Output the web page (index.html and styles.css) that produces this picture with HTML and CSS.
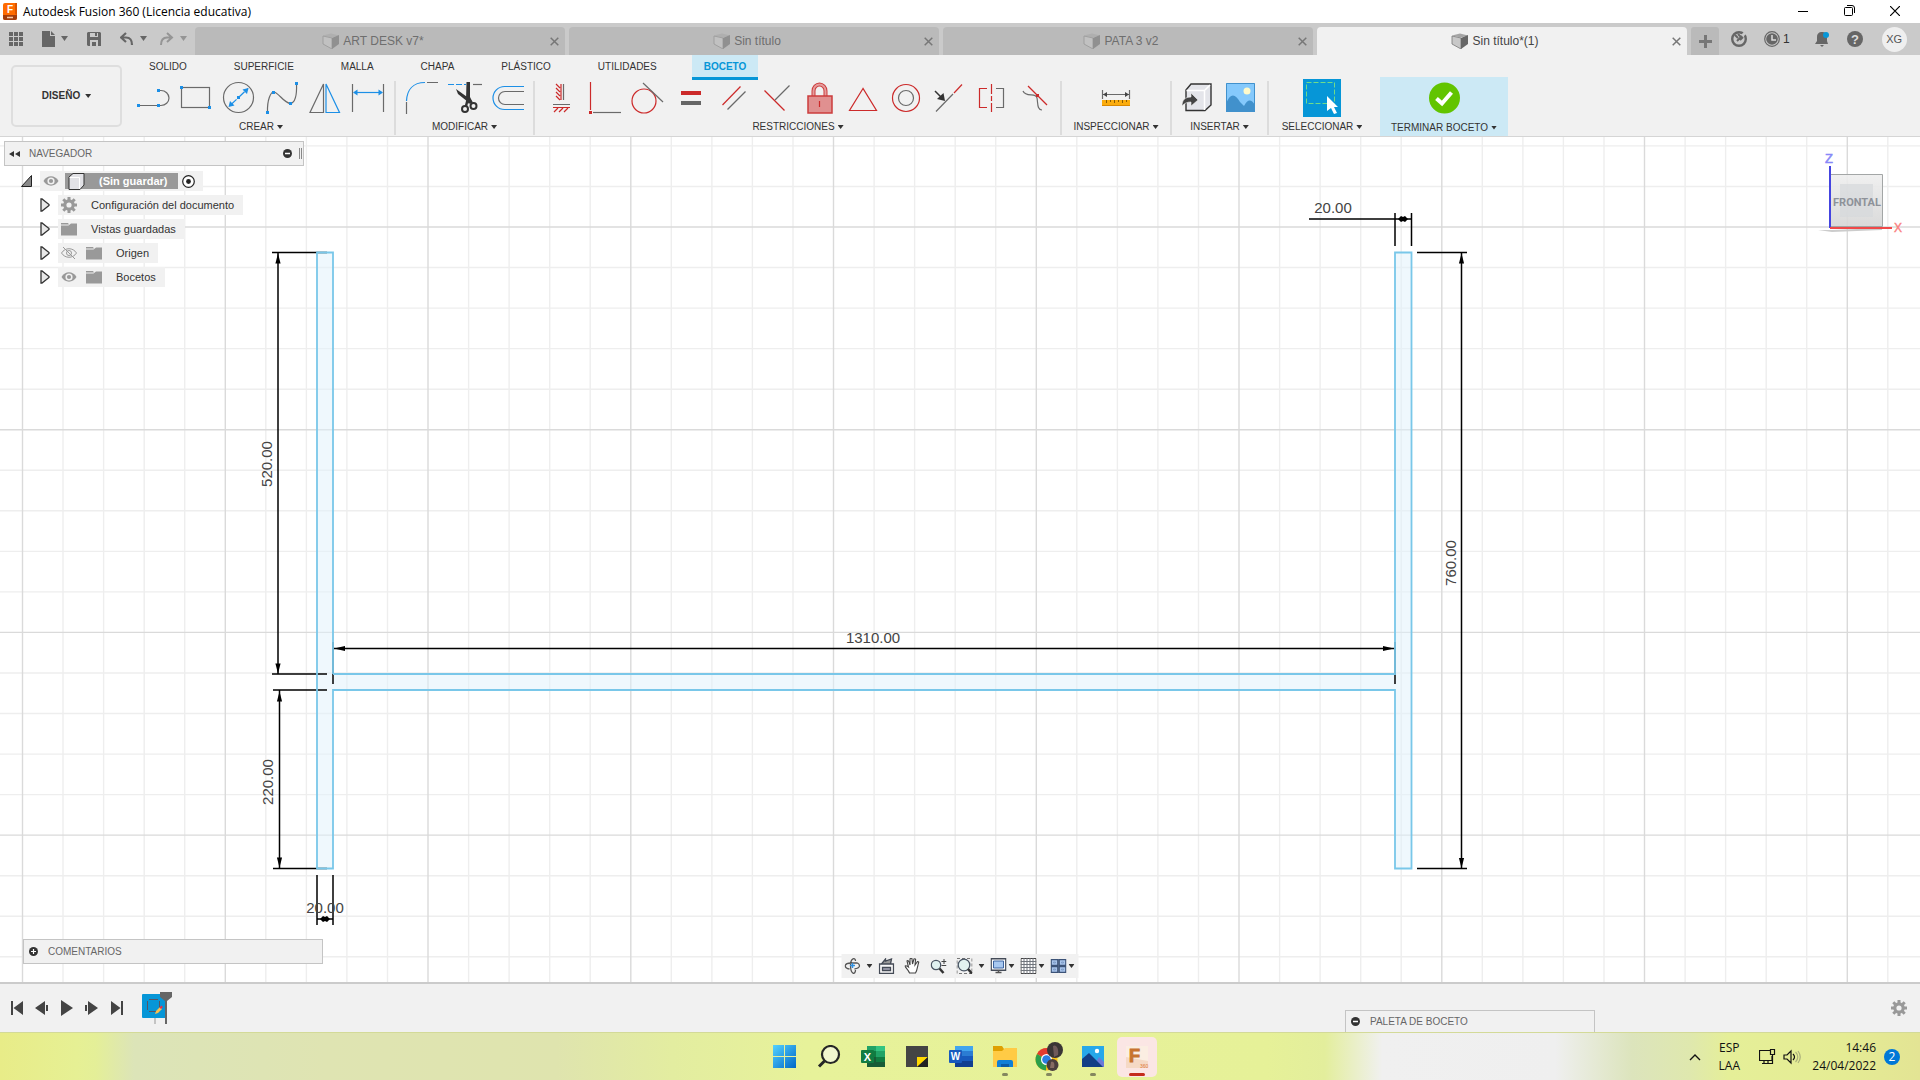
FILE: index.html
```html
<!DOCTYPE html>
<html lang="es">
<head>
<meta charset="utf-8">
<title>Autodesk Fusion 360 (Licencia educativa)</title>
<link rel="stylesheet" href="styles.css">
</head>
<body>
<svg class="defs" aria-hidden="true">
  <defs>
    <symbol id="cube" viewBox="0 0 17 16"><path d="M1 2.500 9 .5l8 2-7 2z" fill="#a5a5a5"/><path d="M1 3l9 2v11l-9-5z" fill="#c8c8c8" stroke="#777" stroke-width=".8"/><path d="M10 5l7-3v9l-7 5z" fill="#676767"/></symbol>
    <symbol id="folder" viewBox="0 0 16 14"><path d="M0 1h7l1 1.500H0z M0 3.500h7.500L10 1.500h6V13.500H0z" fill="#999"/></symbol>
    <symbol id="eye" viewBox="0 0 16 12"><path d="M.5 6C4-.2 12-.2 15.500 6 12 12.200 4 12.200.5 6z" fill="#999"/><circle cx="8" cy="6" r="3.600" fill="#f1f1f1"/><circle cx="8" cy="6" r="2.100" fill="#999"/></symbol>
    <symbol id="gear" viewBox="0 0 16 16"><circle cx="8" cy="8" r="4.200" fill="none" stroke="#999" stroke-width="3.200"/><path d="M8 0v3M8 13v3M0 8h3M13 8h3M2.300 2.300l2.200 2.200M11.500 11.500l2.200 2.200M2.300 13.700l2.200-2.200M11.500 4.500l2.200-2.200" stroke="#999" stroke-width="3"/></symbol>
    <symbol id="x" viewBox="0 0 9 9"><path d="M.7.7l7.600 7.600M8.300.7L.7 8.300" stroke="currentColor" stroke-width="1.500"/></symbol>
    <symbol id="tri" viewBox="0 0 10 14"><path d="M1 1v12l1 0 7-5.500v-1L2 1z" fill="#e8e8e8" stroke="#333" stroke-width="1.300"/></symbol>
    <symbol id="up" viewBox="0 0 6 10"><path d="M3 0l2.600 10H.4z"/></symbol>
  </defs>
</svg>

<header class="titlebar">
  <svg class="app-logo" width="14" height="17" viewBox="0 0 14 17"><rect width="14" height="17" rx="2" fill="#ff6b00"/><path d="M0 12h14v3a2 2 0 0 1-2 2H2a2 2 0 0 1-2-2z" fill="#a23c0c"/><path d="M12 0h2v12l-2-1z" fill="#d95400"/><text x="4" y="10" font-size="10" font-weight="bold" fill="#fff" font-family="Liberation Sans, sans-serif">F</text><path d="M4 14.500h6" stroke="#f7c9a9" stroke-width="1.500"/></svg>
  <h1>Autodesk Fusion 360 (Licencia educativa)</h1>
  <div class="window-buttons">
    <button aria-label="Minimizar"><svg width="10" height="10"><path d="M0 5.500h10" stroke="#000"/></svg></button>
    <button aria-label="Restaurar"><svg width="11" height="11" fill="none" stroke="#000"><rect x=".5" y="2.500" width="8" height="8" rx="1"/><path d="M3 .5h5a2.500 2.500 0 0 1 2.500 2.500v5"/></svg></button>
    <button aria-label="Cerrar"><svg width="10" height="10"><path d="M0 0l10 10M10 0L0 10" stroke="#000" stroke-width="1.200"/></svg></button>
  </div>
</header>

<nav class="tabbar">
  <div class="quick">
    <button aria-label="Panel de datos"><svg width="14" height="14" fill="#666"><path d="M0 0h4v4H0zM5 0h4v4H5zM10 0h4v4h-4zM0 5h4v4H0zM5 5h4v4H5zM10 5h4v4h-4zM0 10h4v4H0zM5 10h4v4H5zM10 10h4v4h-4z"/></svg></button>
    <button class="q-file" aria-label="Archivo"><svg width="26" height="16" fill="#666"><path d="M0 0h8v5h5v11H0zM9 0l4 4H9zM19 5h7l-3.500 5z"/></svg></button>
    <button class="q-save" aria-label="Guardar"><svg width="14" height="14"><path d="M1 0h12l1 1v13H1l-1-1V1z" fill="#666"/><path d="M3 1h8v4H3zM3 8h8v6H3z" fill="#cacaca"/><path d="M8 1h2v3H8zM5 10h4v4H5z" fill="#666"/></svg></button>
    <button class="q-undo" aria-label="Deshacer"><svg width="27" height="14"><path d="M6 1L1 5.500 6 10M1.500 5.500H6c5 0 6 3 6 7.500" fill="none" stroke="#666" stroke-width="2.200"/><path d="M20 4h7l-3.500 5z" fill="#666"/></svg></button>
    <button class="q-redo" aria-label="Rehacer"><svg width="27" height="14"><path d="M7 1l5 4.500L7 10M11.500 5.500H7C2 5.500 1 8.500 1 13" fill="none" stroke="#959595" stroke-width="2"/><path d="M20 4h7l-3.500 5z" fill="#959595"/></svg></button>
  </div>
  <div class="doc-tabs">
    <div class="doc"><a href="#"><svg width="17" height="16" opacity=".5"><use href="#cube"/></svg>ART DESK v7*</a><button aria-label="Cerrar pestaña"><svg width="9" height="9"><use href="#x"/></svg></button></div>
    <div class="doc"><a href="#"><svg width="17" height="16" opacity=".5"><use href="#cube"/></svg>Sin título</a><button aria-label="Cerrar pestaña"><svg width="9" height="9"><use href="#x"/></svg></button></div>
    <div class="doc"><a href="#"><svg width="17" height="16" opacity=".5"><use href="#cube"/></svg>PATA 3 v2</a><button aria-label="Cerrar pestaña"><svg width="9" height="9"><use href="#x"/></svg></button></div>
    <div class="doc active"><a href="#"><svg width="17" height="16"><use href="#cube"/></svg>Sin título*(1)</a><button aria-label="Cerrar pestaña"><svg width="9" height="9"><use href="#x"/></svg></button></div>
  </div>
  <button class="new-tab" aria-label="Nueva pestaña"><svg width="13" height="13"><path d="M6.500 0v13M0 6.500h13" stroke="#777" stroke-width="3"/></svg></button>
  <div class="account">
    <button aria-label="Extensiones"><svg width="16" height="16"><circle cx="8" cy="8" r="6.800" fill="none" stroke="#666" stroke-width="2.400"/><path d="M11 5l5-5" stroke="#cacaca" stroke-width="3"/><path d="M4 4l3 3M7 3l3 3M6 10l5-5M9 9l3-3" stroke="#666" stroke-width="2"/></svg></button>
    <button class="jobs" aria-label="Estado de trabajos"><svg width="16" height="16"><circle cx="8" cy="8" r="7.300" fill="none" stroke="#666" stroke-width="1.200"/><circle cx="8" cy="8" r="5.800" fill="#666"/><path d="M8 4v5h4" fill="none" stroke="#ddd" stroke-width="1.500"/></svg>1</button>
    <button class="bell" aria-label="Notificaciones"><svg width="15" height="16"><path d="M6 1a5 5 0 0 0-4 5v4l-2 3h13l-1-3V6A5 5 0 0 0 8 1zM5 14h4l-2 2z" fill="#666"/><circle cx="11" cy="4" r="3" fill="#0696d7"/></svg></button>
    <button class="help" aria-label="Ayuda"><svg width="16" height="16"><circle cx="8" cy="8" r="8" fill="#666"/><text x="8" y="13" font-size="13" font-weight="bold" text-anchor="middle" fill="#ddd" font-family="Liberation Sans, sans-serif">?</text></svg></button>
    <button class="avatar">XG</button>
  </div>
</nav>

<section class="ribbon">
  <button class="workspace">DISEÑO<i class="caret"></i></button>
  <div class="ribbon-main">
    <nav class="ribbon-tabs">
      <a href="#">SOLIDO</a><a href="#">SUPERFICIE</a><a href="#">MALLA</a><a href="#">CHAPA</a><a href="#">PLÁSTICO</a><a href="#">UTILIDADES</a><a href="#" class="current">BOCETO</a>
    </nav>
    <div class="groups">
      <div class="group">
        <div class="tools">
          <button aria-label="Línea"><svg class="tool" viewBox="0 2 43 38"><path d="M6 26.500H29a8 7.500 0 0 0 0-15H27" class="g"/><path d="M5 25h3v3H5zM25 25h3v3h-3zM25 10h3v3h-3z" class="bf"/></svg></button>
          <button aria-label="Rectángulo"><svg class="tool" viewBox="0 2 43 38"><rect x="6.500" y="8.500" width="28" height="20" class="g"/><path d="M5 7h3v3H5zM33 27h3v3h-3z" class="bf"/></svg></button>
          <button aria-label="Círculo"><svg class="tool" viewBox="0 2 43 38"><circle cx="20.500" cy="18.500" r="15" class="g"/><path d="M12 26.500L30 9.500" class="b" stroke-dasharray="9 2"/><path d="M10.500 28l1.500-6 4.500 4.500zM30.500 9L29 15l-4.500-4.500zM19 17h3v3h-3z" class="bf"/></svg></button>
          <button aria-label="Spline"><svg class="tool" viewBox="0 2 43 38"><path d="M6.500 33.500C6 20 10 13 12.500 13c5 0 10 11 17 11.500 5-1 6.500-8 6-20" class="g"/><path d="M5 32h3v3H5zM11 12h3v3h-3zM28 23h3v3h-3zM34 3h3v3h-3z" class="bf"/></svg></button>
          <button aria-label="Simetría"><svg class="tool" viewBox="0 2 43 38"><path d="M19.500 5v28.500H6z" class="g"/><path d="M22 5v28.500h13.500z" class="b"/></svg></button>
          <button aria-label="Cota"><svg class="tool" viewBox="0 2 43 38"><path d="M5.500 5v28M36.500 5v28" class="g"/><path d="M8 13.500h27" class="b"/><path d="M6 13.500l4.500-3v6zM36 13.500l-4.500-3v6z" class="bf"/></svg></button>
        </div>
        <button class="menu">CREAR<i class="caret"></i></button>
      </div>
      <div class="group tight">
        <div class="tools">
          <button aria-label="Empalme"><svg class="tool" viewBox="0 2 43 38"><path d="M6.500 22C7 11 13 3.500 25 3.500" class="b"/><path d="M27 3.500h11M6.500 23v12" class="g"/></svg></button>
          <button aria-label="Recortar"><svg class="tool" viewBox="0 2 43 38"><path d="M5 5.500h18" class="b" stroke-dasharray="6 2"/><path d="M30 5.500h9" class="g"/><path d="M23.500 3h3.500v15l2 4-3 3-3-4zM13 10l14 10-2 3-10-8z" fill="#333"/><circle cx="22" cy="30" r="3" fill="none" stroke="#333" stroke-width="2"/><circle cx="30.500" cy="27" r="3" fill="none" stroke="#333" stroke-width="2"/><path d="M24.500 21l-1.500 6M26 21l3 3" stroke="#333" stroke-width="2.500"/></svg></button>
          <button aria-label="Desfase"><svg class="tool" viewBox="0 2 43 38"><path d="M38 7.500H18.500a11.500 11.500 0 0 0 0 23H38" class="b"/><path d="M38 12.500H19a6.500 6.500 0 0 0 0 13H38" class="g"/></svg></button>
        </div>
        <button class="menu">MODIFICAR<i class="caret"></i></button>
      </div>
      <div class="group">
        <div class="tools">
          <button aria-label="Horizontal/Vertical"><svg class="tool" viewBox="0 2 43 38"><path d="M21 5v16M13 28.500h17M20 9l-4-4M20 13l-4-4M20 17l-4-4M20 21l-4-4M18 29l-4 4M23 29l-4 4M28 29l-4 4" class="r"/><path d="M23.500 5v16M13 25.500h17" class="g"/></svg></button>
          <button aria-label="Coincidente"><svg class="tool" viewBox="0 2 43 38"><path d="M7.500 3v28" class="r"/><path d="M10 33.500h28" class="g"/><path d="M6 32h3v3H6z" class="rf"/></svg></button>
          <button aria-label="Tangente"><svg class="tool" viewBox="0 2 43 38"><circle cx="18" cy="22" r="12" class="r"/><path d="M17 4l20 19" class="g"/></svg></button>
          <button aria-label="Igual"><svg class="tool" viewBox="0 2 43 38"><path d="M12 12h20v4H12z" class="rf"/><path d="M12 22h20v4H12z" fill="#666"/></svg></button>
          <button aria-label="Paralela"><svg class="tool" viewBox="0 2 43 38"><path d="M10.500 26l18-18.500" class="r"/><path d="M15.500 30.500l18-18" class="g"/></svg></button>
          <button aria-label="Perpendicular"><svg class="tool" viewBox="0 2 43 38"><path d="M9.500 11.500l20 20" class="r"/><path d="M20 21L34.500 6.500" class="g"/></svg></button>
          <button aria-label="Bloquear"><svg class="tool" viewBox="0 2 43 38"><path d="M15.500 17v-5a6 6.500 0 0 1 12 0v5" fill="none" stroke="#cc3c3c" stroke-width="4"/><path d="M15.500 17v-5a6 6.500 0 0 1 12 0v5" fill="none" stroke="#e59c9c" stroke-width="2"/><rect x="10" y="17" width="24" height="17" fill="#e09090" stroke="#cc3c3c" stroke-width="1.500"/><path d="M21.500 22v6" class="r"/></svg></button>
          <button aria-label="Fijar"><svg class="tool" viewBox="0 2 43 38"><path d="M22 9.500L8.500 31.500h27z" class="r"/></svg></button>
          <button aria-label="Concéntrico"><svg class="tool" viewBox="0 2 43 38"><circle cx="22" cy="19" r="13.500" class="r"/><circle cx="22" cy="19" r="7.500" class="g"/></svg></button>
          <button aria-label="Punto medio"><svg class="tool" viewBox="0 2 43 38"><path d="M9 32.500L26 15" class="g"/><path d="M27 14l8-8.500" class="r"/><path d="M8 12l7 7" stroke="#333" stroke-width="1.500"/><path d="M18 22l-1.500-8L10 20z" fill="#333"/></svg></button>
          <button aria-label="Simétrica"><svg class="tool" viewBox="0 2 43 38"><path d="M17 9.500H9.500v19H17M21.500 5v10M21.500 17v5M21.500 24v9" class="r"/><path d="M26 9.500h7.500v19H26" class="g"/></svg></button>
          <button aria-label="Curvatura"><svg class="tool" viewBox="0 2 43 38"><path d="M10 12c3 7 13 1 14 7 1 5 0 12 5 12" class="g"/><path d="M15 7l19 19" class="r"/><path d="M23 15h3v3h-3z" class="rf"/></svg></button>
        </div>
        <button class="menu">RESTRICCIONES<i class="caret"></i></button>
      </div>
      <div class="group g-inspect">
        <div class="tools">
          <button aria-label="Medir"><svg class="tool" viewBox="0 2 43 38"><path d="M7.500 11v9M34.500 11v9M8 15.500h26" class="g"/><path d="M8 15.500l4-2.500v5zM34 15.500l-4-2.500v5z" fill="#444"/><path d="M7 21h28v6H7z" fill="#fbac0d"/><path d="M11.500 21v3M15.500 21v2M19.500 21v3M23.500 21v2M27.500 21v3M31.500 21v2" stroke="#8a5a00"/><path d="M7 26.500h28" stroke="#d98800"/></svg></button>
        </div>
        <button class="menu">INSPECCIONAR<i class="caret"></i></button>
      </div>
      <div class="group g-insert">
        <div class="tools">
          <button aria-label="Insertar derivado"><svg class="tool" viewBox="0 2 43 38"><path d="M9 11l5-6h20v21l-6 5.500H9z" fill="#e4e5ea" stroke="#333" stroke-width="1.400"/><path d="M9.500 11.500h18v19.500M28 11l5-5" fill="none" stroke="#fff" stroke-width="1.500"/><path d="M5 27c0-6 3-9 9-9v-4l7 7-7 6v-4c-4 0-6 1-9 4z" fill="#444" stroke="#f1f1f1" stroke-width=".6"/></svg></button>
          <button aria-label="Insertar lienzo"><svg class="tool" viewBox="0 2 43 38"><path d="M6 4h29v29H6z" fill="#85c9fc"/><path d="M6 25c4-11 9-11 14-2l4 4c4-7 7-7 11-1v7H6z" fill="#4191cc"/><path d="M6.500 4.500h28v28h-28z" fill="none" stroke="#4191cc"/><circle cx="27" cy="12" r="3.500" fill="#fffacb"/></svg></button>
        </div>
        <button class="menu">INSERTAR<i class="caret"></i></button>
      </div>
      <div class="group g-select">
        <div class="tools">
          <button aria-label="Seleccionar"><svg class="tool wide" viewBox="0 2 43 38"><path d="M2 0h38v38H2z" fill="#0696d7"/><path d="M5.500 3.500h28v21h-28z" fill="none" stroke="#6fdc8a" stroke-dasharray="5 2"/><path d="M26 17v15l4-3 3 6 3-1-3-6h4z" fill="#fff"/></svg></button>
        </div>
        <button class="menu">SELECCIONAR<i class="caret"></i></button>
      </div>
      <div class="group g-finish">
        <div class="tools">
          <button aria-label="Terminar"><svg class="tool" viewBox="0 2 43 38"><circle cx="21.500" cy="19" r="15.500" fill="#62c400"/><path d="M13.500 19.500l5.500 5 9.500-11" fill="none" stroke="#fff" stroke-width="4"/></svg></button>
        </div>
        <button class="menu">TERMINAR BOCETO<i class="caret"></i></button>
      </div>
    </div>
  </div>
</section>

<main class="canvas">
  <svg class="sketch" role="img" aria-label="Boceto">
    <g transform="translate(0,-137)">
      <path stroke="#eee" stroke-width="1.400" d="M63 137v1900M103.600 137v1900M144.200 137v1900M184.700 137v1900M265.800 137v1900M306.400 137v1900M346.900 137v1900M387.500 137v1900M468.600 137v1900M509.100 137v1900M549.700 137v1900M590.200 137v1900M671.300 137v1900M711.900 137v1900M752.400 137v1900M793 137v1900M874.100 137v1900M914.600 137v1900M955.200 137v1900M995.700 137v1900M1076.800 137v1900M1117.400 137v1900M1157.900 137v1900M1198.500 137v1900M1279.600 137v1900M1320.100 137v1900M1360.700 137v1900M1401.200 137v1900M1482.300 137v1900M1522.900 137v1900M1563.400 137v1900M1604 137v1900M1685.100 137v1900M1725.600 137v1900M1766.200 137v1900M1806.700 137v1900M1887.800 137v1900
      M0 145.900h4000M0 186.500h4000M0 267.500h4000M0 308.100h4000M0 348.600h4000M0 389.200h4000M0 470.300h4000M0 510.800h4000M0 551.400h4000M0 591.900h4000M0 673h4000M0 713.500h4000M0 754.100h4000M0 794.600h4000M0 875.700h4000M0 916.200h4000M0 956.800h4000"/>
      <path stroke="#dadada" stroke-width="1.400" d="M22.500 137v1900M225.300 137v1900M428 137v1900M630.800 137v1900M833.500 137v1900M1036.300 137v1900M1239 137v1900M1441.800 137v1900M1644.500 137v1900M1847.300 137v1900M0 227h4000M0 429.700h4000M0 632.400h4000M0 835.100h4000"/>
      <path fill="#dff1fb" fill-opacity=".5" d="M317 252.500h16V674h1062V252.500h16.500V868.500H1395V690H333v178.500h-16z"/>
      <g stroke="#000" stroke-width="1.500" fill="none">
        <path d="M272 252.500h55M278 253v421M272 674h55M273 690h54M279.500 690v178.500M273 868.500h54"/>
        <path d="M333 642v42M1395 642v42M333 648.500h1062"/>
        <path d="M317 875v50M333 875v50M317 919h16"/>
        <path d="M1309 219h102M1395 213v33M1411.500 213v33"/>
        <path d="M1417 252.500h50M1461.500 253v616M1417 868.500h50"/>
      </g>
      <use href="#up" x="275" y="253" width="6" height="11"/>
      <use href="#up" x="275" y="253" width="6" height="11" transform="rotate(180 278 463.500)"/>
      <use href="#up" x="276.500" y="691" width="6" height="11"/>
      <use href="#up" x="276.500" y="691" width="6" height="11" transform="rotate(180 279.500 779.500)"/>
      <use href="#up" x="1458.500" y="253" width="6" height="11"/>
      <use href="#up" x="1458.500" y="253" width="6" height="11" transform="rotate(180 1461.500 560.700)"/>
      <path d="M334 648.500l11-2.600v5.200zM1394 648.500l-11-2.600v5.200z"/>
      <path d="M320 919l3-3 2 1 2-1 3 3-3 3-2-1-2 1zM1398 219l3-3 2 1 2-1 3 3-3 3-2-1-2 1z"/>
      <path fill="none" stroke="#79c7e9" stroke-width="1.800" d="M333 674V252.500h-16v616h16V690h1062v178.500h16.500v-616H1395V674H333"/>
      <g class="dims">
        <text x="873" y="643">1310.00</text>
        <text x="1333" y="213">20.00</text>
        <text x="325" y="913">20.00</text>
        <text transform="translate(272 464) rotate(-90)">520.00</text>
        <text transform="translate(273 782) rotate(-90)">220.00</text>
        <text transform="translate(1456 563) rotate(-90)">760.00</text>
      </g>
    </g>
  </svg>

  <aside class="browser">
    <div class="panel-head">
      <svg width="11" height="6"><path d="M5 0v6L0 3zM11 0v6L6 3z" fill="#333"/></svg>
      <h2>NAVEGADOR</h2>
      <svg class="dot" width="9" height="9"><circle cx="4.500" cy="4.500" r="4.500" fill="#333"/><path d="M2 4.500h5" stroke="#fff" stroke-width="1.500"/></svg>
      <i class="grip"></i>
    </div>
    <ul class="tree">
      <li class="root"><svg class="exp" width="11" height="12"><path d="M10.500.5v11H.5z" fill="#888" stroke="#222"/></svg>
        <span class="node"><svg width="16" height="12"><use href="#eye"/></svg><b><svg width="17" height="17"><path d="M1 4l4-3.500h11V12l-4 4.500H1z" fill="#e2e2e6" stroke="#333"/><path d="M1.500 4.500h10V16" fill="none" stroke="#fff"/></svg>(Sin guardar)</b><svg width="13" height="13"><circle cx="6.500" cy="6.500" r="5.800" fill="#fff" stroke="#222" stroke-width="1.200"/><circle cx="6.500" cy="6.500" r="2.400" fill="#222"/></svg></span></li>
      <li><svg class="exp" width="10" height="14"><use href="#tri"/></svg><span class="node"><svg width="16" height="16"><use href="#gear"/></svg><em>Configuración del documento</em></span></li>
      <li><svg class="exp" width="10" height="14"><use href="#tri"/></svg><span class="node"><svg width="16" height="14"><use href="#folder"/></svg><em>Vistas guardadas</em></span></li>
      <li><svg class="exp" width="10" height="14"><use href="#tri"/></svg><span class="node"><svg width="16" height="12" fill="none" stroke="#999"><path d="M.5 6C4 .3 12 .3 15.500 6 12 11.700 4 11.700.5 6zM2 0l12 12"/><circle cx="8" cy="6" r="2.500"/></svg><svg class="second" width="16" height="14"><use href="#folder"/></svg><em>Origen</em></span></li>
      <li><svg class="exp" width="10" height="14"><use href="#tri"/></svg><span class="node"><svg width="16" height="12"><use href="#eye"/></svg><svg class="second" width="16" height="14"><use href="#folder"/></svg><em>Bocetos</em></span></li>
    </ul>
  </aside>

  <svg class="viewcube" width="100" height="92" viewBox="0 0 100 92">
    <defs><linearGradient id="vc" x1="0" y1="0" x2="0" y2="1"><stop offset="0" stop-color="#eee"/><stop offset="1" stop-color="#d6d6d6"/></linearGradient></defs>
    <path d="M8 80h14l50-2v2l-50 2z" fill="#ccc"/>
    <path d="M20.500 24.500h52v52h-52z" fill="url(#vc)" fill-opacity=".9" stroke="#a3a6a6"/>
    <path d="M30 34h33v33H30z" fill="#d5d8dc" fill-opacity=".7"/>
    <text x="47" y="56" font-size="11" font-weight="bold" fill="#8e9299" text-anchor="middle" font-family="Roboto, sans-serif">FRONTAL</text>
    <path d="M20 16v62" stroke="#4444e0" stroke-width="2"/><path d="M20 78h62" stroke="#f04848" stroke-width="2"/>
    <text x="15" y="13" font-size="13" fill="#8888f8" stroke="#8888f8" stroke-width=".5" font-family="Liberation Sans, sans-serif">Z</text>
    <text x="84" y="82" font-size="12" fill="#fa8080" stroke="#fa8080" stroke-width=".4" font-family="Liberation Sans, sans-serif">X</text>
  </svg>

  <div class="comments"><svg class="dot" width="9" height="9"><circle cx="4.500" cy="4.500" r="4.500" fill="#333"/><path d="M2 4.500h5M4.500 2v5" stroke="#fff" stroke-width="1.200"/></svg><h2>COMENTARIOS</h2></div>

  <div class="navbar">
    <button class="spaced" aria-label="Orbitar"><svg width="16" height="16" fill="none" stroke="#555" stroke-width="1.300"><path d="M5 11c-6-1-6-6 2-6h6M11 3c0-4-5-3-5 4 0 10 5 10 5 5M10 11c6-1 6-4 3-6"/><path d="M8 5v5M5.500 7.500h5" stroke="#2f8fe0" stroke-width="1.500"/></svg><i class="caret"></i></button>
    <button class="plain" aria-label="Mirar a"><svg width="16" height="16" fill="#f8f8f8" stroke="#444a55" stroke-width="1.300"><path d="M3 6l4-5v2l6-2-1 5" fill="#999"/><path d="M1 6h14v9.500H1z"/><path d="M4 9.500h8v3H4z" fill="#aab"/></svg></button>
    <button class="plain" aria-label="Encuadre"><svg width="16" height="16"><path d="M5 15c-1-3-4-5-4.500-7 1-1 2 0 3.500 1L2.500 3c1-1 2 0 3 4V1c1-1 2-1 2 0l.5 5L9.500 1c1-.500 2 0 1.500 1l-.5 5L13 3.500c1 0 1.500.5 1 1.500-1 3-1 7-3 10z" fill="#fff" stroke="#444" stroke-width="1.100"/></svg></button>
    <button class="plain" aria-label="Zoom"><svg width="16" height="16"><circle cx="5.500" cy="7" r="4.700" fill="#dff0f0" stroke="#4a5564" stroke-width="1.300"/><path d="M9 10.500l4 4.500" stroke="#333" stroke-width="2.500"/><path d="M13.500 1v5M11 3.500h5M11 7.500h5" stroke="#444"/></svg></button>
    <button class="spaced" aria-label="Ventana de zoom"><svg width="16" height="16"><path d="M.5.5h15v15H.5z" fill="none" stroke="#777" stroke-dasharray="3 2"/><circle cx="7.500" cy="7" r="5.800" fill="#e2f1f0" stroke="#4a5564" stroke-width="1.300"/><path d="M11.500 11l4 4.500" stroke="#333" stroke-width="2.500"/></svg><i class="caret"></i></button>
    <button aria-label="Visualización"><svg width="16" height="16"><path d="M.7.7h14.600v11.600H.7z" fill="#fff" stroke="#444b58" stroke-width="1.400"/><path d="M3 3h10v7H3z" fill="#a8c8f0" stroke="#3d64a0"/><path d="M5 14.500h6M8 12v3" stroke="#555" stroke-width="1.500"/></svg><i class="caret"></i></button>
    <button aria-label="Rejilla"><svg width="16" height="16"><path d="M.5.500h15v15H.5z" fill="#fff" stroke="#444"/><path d="M3.500 0v16M6.500 0v16M9.500 0v16M12.500 0v16M0 3.500h16M0 6.500h16M0 9.500h16M0 12.500h16" stroke="#70757c"/></svg><i class="caret"></i></button>
    <button aria-label="Ventanas"><svg width="16" height="14" fill="#a9c5ec" stroke="#3c5378" stroke-width="1.300"><path d="M.7.7h6.600v5.600H.7zM8.700.7h6.600v5.600H8.700zM.7 7.700h6.600v5.600H.7zM8.700 7.700h6.600v5.600H8.700z"/><path d="M3 3h2v1H3zM11 3h2v1h-2zM3 10h2v1H3zM11 10h2v1h-2z" stroke="#7f9cc6" stroke-width="1"/></svg><i class="caret"></i></button>
  </div>
</main>

<footer class="timeline">
  <div class="playback">
    <button aria-label="Inicio"><svg width="12" height="14"><path d="M0 0h2v14H0zM12 0v14L2.500 7z"/></svg></button>
    <button aria-label="Atrás"><svg width="14" height="14"><path d="M10 0v14L0 7zM11 4h2v6h-2z"/></svg></button>
    <button aria-label="Reproducir"><svg width="12" height="16"><path d="M0 0l12 8-12 8z"/></svg></button>
    <button aria-label="Adelante"><svg width="14" height="14"><path d="M3 0v14l10-7zM0 4h2v6H0z"/></svg></button>
    <button aria-label="Final"><svg width="12" height="14"><path d="M10 0h2v14h-2zM0 0v14l9.500-7z"/></svg></button>
  </div>
  <button class="feature" aria-label="Boceto"><svg width="30" height="33"><rect y="2" width="24" height="24" rx="1" fill="#0696d7"/><rect x="5.500" y="7.500" width="12" height="12" rx="1" fill="none" stroke="#556" /><path d="M4 6h3v3H4zM16 6h3v3h-3zM4 18h3v3H4z" fill="#0696d7"/><path d="M14 19l4-4 2 2-4 4-3 1z" fill="#fbc04d"/><path d="M17.500 15.500l2-2 1.500 1.500-2 2z" fill="#e8304a"/><path d="M12 26h2v6h-2z" fill="#c4c4c4"/><path d="M18 0h12v5l-5 4v23h-2V9l-5-4z" fill="#666"/></svg></button>
  <div class="palette"><svg class="dot" width="9" height="9"><circle cx="4.500" cy="4.500" r="4.500" fill="#333"/><path d="M2 4.500h5" stroke="#fff" stroke-width="1.500"/></svg><h2>PALETA DE BOCETO</h2></div>
  <button class="settings" aria-label="Preferencias"><svg width="16" height="16"><use href="#gear"/></svg></button>
</footer>

<div class="taskbar">
  <div class="apps">
    <button aria-label="Inicio"><svg width="24" height="24"><defs><linearGradient id="w" x1="0" y1="0" x2="1" y2="1"><stop offset="0" stop-color="#54d3ff"/><stop offset="1" stop-color="#0067c8"/></linearGradient></defs><path d="M0 0h11v11H0zM12 0h11v11H12zM0 12h11v11H0zM12 12h11v11H12z" fill="url(#w)"/></svg></button>
    <button aria-label="Buscar"><svg width="24" height="24"><circle cx="13.500" cy="9.500" r="8.500" fill="#f2f6cf" stroke="#262626" stroke-width="2.200"/><path d="M7.500 16L2 21.500" stroke="#262626" stroke-width="3"/></svg></button>
    <button aria-label="Excel"><svg width="24" height="24"><path d="M6 1h18v21H6z" fill="#21a366"/><path d="M15 1h9v5h-9z" fill="#33c481"/><path d="M6 6h9v6H6z" fill="#107c41"/><path d="M6 12h18v10H6z" fill="#185c37"/><path d="M15 12h9v5h-9z" fill="#107c41"/><rect y="5" width="13" height="13" rx="1" fill="#107c41"/><text x="6.500" y="15.500" font-size="11" font-weight="bold" text-anchor="middle" fill="#fff" font-family="Liberation Sans, sans-serif">X</text></svg></button>
    <button aria-label="Notas"><svg width="24" height="24"><path d="M1 1h22v21H1z" fill="#444"/><path d="M12 22V12h11z" fill="#ffd800"/><path d="M12 22l11-10v10z" fill="#222"/></svg></button>
    <button aria-label="Word"><svg width="24" height="24"><path d="M6 1h18v6H6z" fill="#41a5ee"/><path d="M6 6h18v6H6z" fill="#2b7cd3"/><path d="M6 11h18v6H6z" fill="#185abd"/><path d="M6 16h18v6H6z" fill="#103f91"/><rect y="5" width="13" height="13" rx="1" fill="#185abd"/><text x="6.500" y="15" font-size="10" font-weight="bold" text-anchor="middle" fill="#fff" font-family="Liberation Sans, sans-serif">W</text></svg></button>
    <button class="running" aria-label="Explorador"><svg width="24" height="24"><path d="M0 1h9l2 3h13v6H0z" fill="#dfa000"/><path d="M0 6h9l3-3h12v19H0z" fill="#ffcb45"/><path d="M4 22v-5a2 2 0 0 1 2-2h12a2 2 0 0 1 2 2v5z" fill="#0f7fd6"/><path d="M8 19h8v3H8z" fill="#0a5ba6"/></svg></button>
    <button class="running" aria-label="Chrome"><svg width="30" height="30" viewBox="-1 -6 30 30"><circle cx="11.500" cy="11.500" r="11" fill="#fbc116"/><path d="M11.500 11.500L2 6a11 11 0 0 1 19.500 0z" fill="#e33b2e"/><path d="M11.500 11.500L2 6a11 11 0 0 0 9 16.500z" fill="#2c9f4b"/><circle cx="11.500" cy="11.500" r="5.500" fill="#fff"/><circle cx="11.500" cy="11.500" r="4.300" fill="#2a7de1"/><circle cx="20" cy="2" r="8" fill="#3a3535"/><path d="M18-2c3-2 6 2 5 9l-4 2z" fill="#6f5a5a"/><circle cx="17.500" cy="17" r="6" fill="#4a3d3d"/><path d="M16 14c3-1 4 2 3 6h-4z" fill="#856a62"/></svg></button>
    <button class="running" aria-label="Fotos"><svg width="24" height="24"><path d="M1 1h22v21H1z" fill="#26a8ea"/><path d="M12 22l6-10 5 5v5z" fill="#6c79d8"/><path d="M1 14l7-6 14 14H1z" fill="#123f86"/><circle cx="16" cy="6" r="2.200" fill="#fff"/></svg></button>
    <button class="running focus" aria-label="Fusion 360"><svg width="24" height="24"><path d="M1 1h22v22H1z" fill="#fbeee2"/><path d="M1 12l22 4v7H1z" fill="#f5d9c5"/><text x="4" y="17" font-size="18" font-weight="bold" fill="#c87330" stroke="#c87330" font-family="Liberation Sans, sans-serif">F</text><text x="15" y="23" font-size="5" fill="#e07a3c" font-family="Liberation Sans, sans-serif">360</text></svg></button>
  </div>
  <div class="tray">
    <button aria-label="Iconos ocultos"><svg width="12" height="8"><path d="M1 7l5-5 5 5" fill="none" stroke="#111" stroke-width="1.400"/></svg></button>
    <button class="lang">ESP<br>LAA</button>
    <button class="status" aria-label="Red y volumen"><svg width="42" height="20" fill="none" stroke="#111" stroke-width="1.200"><path d="M11 3.500H.5v10H13V9M3 16.500h10M5 13.500v3M9 13.500v3M11.500 2.500h4v5h-4zM13.500 8v9"/><path d="M25 8h3l4-4v12l-4-4h-3z"/><path d="M34 7c2 2 2 4 0 6"/><path d="M36.500 5c3 3 3 7 0 10M39 4c3 4 3 8 0 12" stroke="#aab07c"/></svg></button>
    <time>14:46<br>24/04/2022</time>
    <span class="badge">2</span>
  </div>
</div>
</body>
</html>
```
FILE: styles.css
```css
* { box-sizing: border-box; }
body {
  margin: 0;
  min-height: 100vh;
  display: flex;
  flex-direction: column;
  font: 12px/16px "Liberation Sans", Arial, sans-serif;
  color: #333;
  background: #fff;
  overflow: hidden;
}
button {
  display: flex;
  align-items: center;
  justify-content: center;
  padding: 0;
  border: 0;
  background: none;
  font: inherit;
  color: inherit;
}
a { color: inherit; text-decoration: none; }
h1, h2 { margin: 0; font-weight: normal; }
h2 { font-size: 10px; color: #666; }
svg { display: block; flex: none; }
.defs { position: absolute; width: 0; height: 0; }
.caret {
  width: 6px;
  height: 4px;
  background: #333;
  clip-path: polygon(0 0, 100% 0, 50% 100%);
}

/* Window title */
.titlebar {
  display: flex;
  align-items: center;
  height: 23px;
  padding-left: 3px;
}
.titlebar h1 {
  flex: 1;
  margin-left: 6px;
  font: 12px/20px "Open Sans", "Noto Sans", sans-serif;
  color: #000;
}
.window-buttons { display: flex; padding: 0 2px 2px 0; }
.window-buttons button { width: 46px; height: 20px; }

/* Document tabs */
.tabbar {
  display: flex;
  align-items: flex-end;
  height: 32px;
  background: #cacaca;
}
.quick {
  display: flex;
  align-items: center;
  width: 195px;
  height: 32px;
  padding-left: 9px;
}
.q-file { margin-left: 19px; }
.q-save { margin-left: 19px; }
.q-undo { margin-left: 19px; }
.q-redo { margin-left: 13px; }
.doc-tabs { display: flex; flex: 1; gap: 4px; }
.doc {
  display: flex;
  flex: 1;
  align-items: center;
  height: 28px;
  padding: 0 2px 0 6px;
  border-radius: 4px 4px 0 0;
  background: #bababa;
  color: #6e6e6e;
}
.doc a {
  display: flex;
  flex: 1;
  align-items: center;
  justify-content: center;
  gap: 4px;
}
.doc button { width: 18px; height: 20px; color: #777; }
.doc.active { background: #f1f1f1; color: #444; }
.new-tab {
  width: 28px;
  height: 28px;
  margin-left: 4px;
  border-radius: 3px 3px 0 0;
  background: #bababa;
}
.account {
  display: flex;
  align-items: center;
  height: 32px;
  width: 201px;
  padding-left: 12px;
}
.jobs { gap: 3px; margin-left: 17px; }
.bell { margin-left: 25px; }
.help { margin-left: 17px; }
.avatar {
  width: 25px;
  height: 25px;
  margin-left: 19px;
  border-radius: 50%;
  background: #efefef;
  color: #555;
  font-size: 11px;
}

/* Ribbon */
.ribbon {
  display: flex;
  height: 82px;
  border-bottom: 1px solid #d5d5d5;
  background: #f1f1f1;
  font-size: 10px;
}
.workspace {
  gap: 5px;
  width: 111px;
  height: 62px;
  margin: 10px 5px 0 11px;
  border: 2px solid #dedede;
  border-radius: 5px;
  font-weight: bold;
}
.ribbon-main { flex: 1; }
.ribbon-tabs { display: flex; gap: 23px; height: 22px; padding-left: 10px; }
.ribbon-tabs a { padding: 4px 12px 0; }
.ribbon-tabs .current {
  height: 25px;
  border-bottom: 3px solid #0696d7;
  background: #cce9f5;
  color: #0696d7;
  font-weight: bold;
}
.groups { display: flex; padding-top: 4px; }
.group {
  display: flex;
  flex-direction: column;
  align-items: center;
  height: 54px;
  padding: 0 4px 0 5px;
  border-right: 2px solid #dcdcdc;
}
.group.tight { padding: 0 4px; }
.tools { display: flex; }
.tool { width: 43px; height: 38px; overflow: visible; }
.tool .g, .tool .b, .tool .r { fill: none; stroke: #6a6a6a; stroke-width: 1.2px; }
.tool .b { stroke: #1c8fe6; }
.tool .r { stroke: #cc2a2a; }
.tool .bf { fill: #1c8fe6; }
.tool .rf { fill: #cc2a2a; }
.menu { gap: 3px; height: 18px; }
.g-inspect { width: 110px; padding: 0; }
.g-insert { width: 97px; padding: 0; }
.g-select { width: 106px; padding: 0; border: 0; }
.g-finish {
  width: 128px;
  height: 59px;
  margin: -4px 0 0 5px;
  padding: 4px 0 0;
  border: 0;
  background: #cce9f5;
}

/* Modelling canvas with floating panels */
.canvas { position: relative; flex: 1; background: #fff; }
.sketch { position: absolute; inset: 0; width: 100%; height: 100%; }
.dims text { font-size: 15px; text-anchor: middle; fill: #444; }
.browser { position: absolute; left: 4px; top: 4px; width: 300px; }
.panel-head, .comments, .palette {
  display: flex;
  align-items: center;
  height: 25px;
  border: 1px solid #c4c4c4;
  background: #f1f1f1;
}
.panel-head { padding: 0 1px 0 4px; }
.panel-head h2 { flex: 1; margin-left: 9px; }
.grip {
  width: 3px;
  height: 11px;
  margin-left: 7px;
  border: solid #888;
  border-width: 0 1px;
}
.tree {
  display: flex;
  flex-direction: column;
  gap: 4px;
  margin: 5px 0 0;
  padding: 0;
  list-style: none;
  font-size: 11px;
}
.tree li { display: flex; align-items: center; height: 20px; padding-left: 36px; }
.tree .root { padding-left: 17px; }
.exp { margin-right: 8px; }
.node {
  display: flex;
  align-items: center;
  height: 20px;
  padding: 0 9px 0 3px;
  background: #f1f1f1;
}
.node em { margin-left: 14px; font-style: normal; }
.node .second { margin-left: 9px; }
.root .node { padding: 0 8px 0 3px; }
.root b {
  display: flex;
  align-items: center;
  gap: 14px;
  height: 16px;
  margin: 0 4px 0 6px;
  padding: 0 11px 0 3px;
  background: #999;
  color: #fff;
}
.viewcube { position: absolute; right: 10px; top: 13px; }
.comments {
  position: absolute;
  left: 23px;
  bottom: 18px;
  width: 300px;
  padding-left: 5px;
}
.comments h2, .palette h2 { margin-left: 10px; }
.navbar {
  position: absolute;
  left: 50%;
  bottom: 4px;
  transform: translateX(-50%);
  display: flex;
  align-items: center;
  gap: 6px;
  height: 24px;
  padding: 0 4px 0 3px;
  background: #f1f1f1;
}
.navbar button { gap: 2px; }
.navbar .spaced { gap: 6px; }
.navbar .plain { margin-right: 4px; }

/* Timeline */
.timeline {
  display: flex;
  align-items: center;
  height: 50px;
  padding: 0 13px 0 11px;
  border-top: 2px solid #cbcbcb;
  background: #f1f1f1;
}
.playback { display: flex; align-items: center; gap: 12px; width: 131px; fill: #444; }
.palette {
  align-self: flex-end;
  width: 250px;
  height: 22px;
  margin-left: auto;
  padding-left: 5px;
  border-bottom: 0;
}
.settings { margin-left: 296px; }

/* Windows taskbar */
.taskbar {
  display: grid;
  grid-template-columns: 1fr auto 1fr;
  height: 48px;
  border-top: 1px solid #d3da98;
  background: linear-gradient(90deg, #e8ec88 0, #e6f094 4%, #e4ef98 5%, #dce4b8 7%, #dfe4b2 17%, #dfe4ae 29%, #e3eda0 35%, #e7f29a 42%, #e6f198 66%, #e3ee9c 69%, #f0f0f0 72%, #efefef 81%, #dce4bc 85%, #dfe8ae 88%, #e5ef98 90%, #e5ec94 96%, #e3e494 100%);
  font: 12px/18px "Open Sans", "Noto Sans", sans-serif;
  color: #111;
}
.apps { grid-column: 2; display: flex; gap: 4px; padding: 4px 0 4px 2px; }
.apps button { position: relative; width: 40px; height: 40px; }
.running::after {
  content: "";
  position: absolute;
  left: 17px;
  bottom: 1px;
  width: 6px;
  height: 3px;
  border-radius: 2px;
  background: #84875f;
}
.apps .focus { border-radius: 5px; background: #fbe6e4; }
.focus::after { left: 12px; width: 16px; background: #c42b1c; }
.tray {
  display: flex;
  align-items: center;
  justify-content: flex-end;
  padding-right: 20px;
}
.lang { margin-left: 18px; }
.status { margin-left: 19px; }
.tray time { width: 75px; text-align: right; }
.badge {
  width: 16px;
  height: 16px;
  margin-left: 8px;
  border-radius: 50%;
  background: #0078d7;
  color: #fff;
  line-height: 16px;
  text-align: center;
}
```
